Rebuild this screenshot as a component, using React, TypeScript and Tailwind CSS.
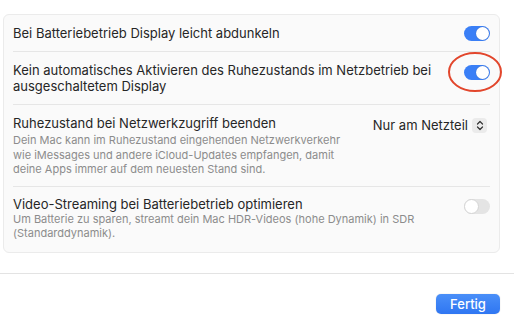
import React from "react";

function Toggle({ on }: { on: boolean }) {
  return on ? (
    <div className="relative h-[15px] w-[26px] rounded-full bg-[#3a7ff6]">
      <div className="absolute right-[1px] top-[1px] h-[13px] w-[13px] rounded-full bg-white shadow-[0_0_1px_rgba(0,0,0,0.3)]" />
    </div>
  ) : (
    <div className="relative h-[15px] w-[26px] rounded-full bg-[#e4e4e4]">
      <div className="absolute left-[0px] top-[0px] h-[15px] w-[15px] rounded-full border border-[#d4d4d4] bg-white" />
    </div>
  );
}

export default function App() {
  return (
    <div
      className="h-[325px] w-[514px] bg-white text-[#262626]"
      style={{ fontFamily: "Inter, 'Noto Sans', sans-serif" }}
    >
      <div className="pl-[3px] pr-[14px] pt-[14px]">
        <div className="rounded-[6px] border border-[#ebebeb] bg-[#fafafa] pl-[9px] pr-[9px]">
          {/* Row 1 */}
          <div className="flex items-center justify-between border-b border-[#e6e6e6] py-[10px]">
            <div className="text-[13px] leading-[16px]">Bei Batteriebetrieb Display leicht abdunkeln</div>
            <Toggle on />
          </div>
          {/* Row 2 */}
          <div className="flex items-start justify-between border-b border-[#e6e6e6] py-[10px]">
            <div className="w-[420px] text-[13px] leading-[16px]">
              Kein automatisches Aktivieren des Ruhezustands im Netzbetrieb bei ausgeschaltetem Display
            </div>
            <div className="relative mt-[3px]">
              <Toggle on />
              <svg
                className="absolute left-[-19px] top-[-16px]"
                width="60"
                height="46"
                viewBox="0 0 60 46"
              >
                <ellipse cx="30" cy="23" rx="26" ry="19" fill="none" stroke="#e2462c" strokeWidth="2" />
              </svg>
            </div>
          </div>
          {/* Row 3 */}
          <div className="flex items-start justify-between border-b border-[#e6e6e6] pb-[9px] pt-[10px]">
            <div>
              <div className="text-[13px] leading-[16px]">Ruhezustand bei Netzwerkzugriff beenden</div>
              <div className="mt-[2px] w-[340px] text-[11px] leading-[14.5px] text-[#8c8c8c]">
                Dein Mac kann im Ruhezustand eingehenden Netzwerkverkehr wie iMessages und andere iCloud-Updates empfangen, damit deine Apps immer auf dem neuesten Stand sind.
              </div>
            </div>
            <div className="mr-[3px] mt-[2px] flex items-center gap-[4px]">
              <span className="text-[13px] leading-[16px]">Nur am Netzteil</span>
              <div className="flex h-[15px] w-[15px] items-center justify-center rounded-[4px] bg-[#ebebeb]">
                <svg width="8" height="11" viewBox="0 0 8 11">
                  <path d="M1.5 4 L4 1.5 L6.5 4 M1.5 7 L4 9.5 L6.5 7" fill="none" stroke="#333" strokeWidth="1.2" strokeLinecap="round" strokeLinejoin="round" />
                </svg>
              </div>
            </div>
          </div>
          {/* Row 4 */}
          <div className="flex items-start justify-between pb-[11px] pt-[10px]">
            <div>
              <div className="text-[13px] leading-[15px]">Video-Streaming bei Batteriebetrieb optimieren</div>
              <div className="w-[420px] text-[11px] leading-[14.5px] text-[#8c8c8c]">
                Um Batterie zu sparen, streamt dein Mac HDR-Videos (hohe Dynamik) in SDR (Standarddynamik).
              </div>
            </div>
            <div className="pt-[2px]">
              <Toggle on={false} />
            </div>
          </div>
        </div>
      </div>
      <div className="mt-[20px] border-t border-[#e3e3e3]" />
      <div className="flex justify-end pr-[14px] pt-[20px]">
        <button className="h-[20px] w-[64px] rounded-[5px] bg-gradient-to-b from-[#4a8ff8] to-[#2f76f2] text-[13px] font-medium leading-[20px] text-white shadow-[0_0_1px_rgba(0,0,0,0.3)]">
          Fertig
        </button>
      </div>
    </div>
  );
}
